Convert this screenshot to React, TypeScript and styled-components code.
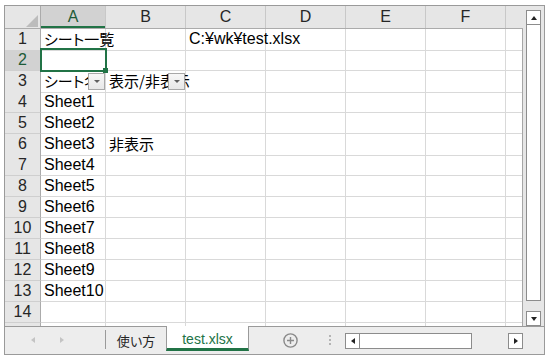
import React from 'react';
import styled, { createGlobalStyle } from 'styled-components';

const GREEN = '#217346';
const GRID = '#d9d9d9';
const HEAD_BG = '#e6e6e6';
const HEAD_LINE = '#ababab';
const FRAME = '#9a9a9a';
const COLS = '36px 65px repeat(5, 80px) 1fr';

const GlobalStyle = createGlobalStyle`
  html, body { margin: 0; background: #fff; }
  body { font-family: "Liberation Sans", "Noto Sans CJK JP", sans-serif; }
`;

const Page = styled.div`
  padding: 5px 0 0 4px;
`;

const Frame = styled.div`
  width: 541px;
  height: 350px;
  box-sizing: border-box;
  border: 1px solid ${FRAME};
  display: flex;
  flex-direction: column;
  background: ${HEAD_BG};
`;

const Upper = styled.div`
  display: flex;
  height: 320px;
`;

const Sheet = styled.div`
  width: 518px;
  display: flex;
  flex-direction: column;
  overflow: hidden;
`;

const HeaderRow = styled.div`
  display: grid;
  grid-template-columns: ${COLS};
  height: 23px;
  box-sizing: border-box;
  border-bottom: 1px solid ${HEAD_LINE};
  background: ${HEAD_BG};
`;

const Corner = styled.div`
  border-right: 1px solid ${HEAD_LINE};
  display: flex;
  justify-content: flex-end;
  align-items: flex-end;
  padding: 0 2px 1px 0;
`;

const ColHead = styled.div<{ $selected?: boolean; $last?: boolean }>`
  border-right: ${(p) => (p.$last ? 'none' : '1px solid #c8c8c8')};
  background: ${(p) => (p.$selected ? '#d2d2d2' : HEAD_BG)};
  box-shadow: ${(p) => (p.$selected ? `inset 0 -2px 0 ${GREEN}` : 'none')};
  color: ${(p) => (p.$selected ? '#1d5b37' : '#262626')};
  font-size: 16px;
  line-height: 22px;
  text-align: center;
`;

const Body = styled.div`
  flex: 1;
  overflow: hidden;
  background: #fff;
  border-right: 1px solid #a6a6a6;
`;

const Row = styled.div`
  display: grid;
  grid-template-columns: ${COLS};
  height: 21px;
`;

const RowHead = styled.div<{ $selected?: boolean }>`
  box-sizing: border-box;
  background: ${(p) => (p.$selected ? '#d2d2d2' : HEAD_BG)};
  border-right: 1px solid ${HEAD_LINE};
  border-bottom: 1px solid #cfcfcf;
  color: ${(p) => (p.$selected ? '#1d5b37' : '#262626')};
  font-size: 16px;
  line-height: 20px;
  text-align: center;
`;

const Cell = styled.div<{ $clip?: boolean; $last?: boolean }>`
  position: relative;
  box-sizing: border-box;
  border-right: ${(p) => (p.$last ? 'none' : `1px solid ${GRID}`)};
  border-bottom: 1px solid ${GRID};
  padding-left: 3px;
  white-space: nowrap;
  overflow: ${(p) => (p.$clip ? 'hidden' : 'visible')};
  font-size: 16px;
  line-height: 20px;
  color: #000;
`;

const Jp = styled.span`
  font-family: "Noto Sans CJK JP", sans-serif;
  font-size: 15px;
  font-feature-settings: "palt";
`;

const Selection = styled.div`
  position: absolute;
  top: -2px;
  left: -1px;
  right: -2px;
  bottom: -2px;
  border: 2px solid ${GREEN};
  z-index: 2;
`;

const Handle = styled.div`
  position: absolute;
  right: -3px;
  bottom: -3px;
  width: 5px;
  height: 5px;
  background: ${GREEN};
  z-index: 3;
`;

const FilterButton = styled.div`
  position: absolute;
  top: 2px;
  right: 0;
  width: 17px;
  height: 17px;
  box-sizing: border-box;
  border: 1px solid #a8a8a8;
  background: linear-gradient(#f7f7f7, #e8e8e8);
  display: flex;
  align-items: center;
  justify-content: center;
  z-index: 1;
`;

const Tri = styled.span<{ $dir: 'up' | 'down' | 'left' | 'right'; $color?: string; $w?: number }>`
  width: 0;
  height: 0;
  border-style: solid;
  border-color: transparent;
  ${(p) => {
    const c = p.$color ?? '#222';
    const w = p.$w ?? 3.5;
    const h = w + 0.5;
    switch (p.$dir) {
      case 'up':
        return `border-width: 0 ${w}px ${h}px ${w}px; border-bottom-color: ${c};`;
      case 'down':
        return `border-width: ${h}px ${w}px 0 ${w}px; border-top-color: ${c};`;
      case 'left':
        return `border-width: ${w}px ${h}px ${w}px 0; border-right-color: ${c};`;
      default:
        return `border-width: ${w}px 0 ${w}px ${h}px; border-left-color: ${c};`;
    }
  }}
`;

const VScroll = styled.div`
  width: 21px;
  display: flex;
  flex-direction: column;
  padding: 4px 0 0 3px;
  box-sizing: border-box;
`;

const ScrollBtn = styled.div`
  width: 15px;
  height: 15px;
  box-sizing: border-box;
  border: 1px solid #8c8c8c;
  background: #fff;
  display: flex;
  align-items: center;
  justify-content: center;
  flex-shrink: 0;
`;

const VThumb = styled.div`
  width: 15px;
  height: 276px;
  box-sizing: border-box;
  border: 1px solid #8c8c8c;
  border-top: none;
  background: #fff;
`;

const VDown = styled(ScrollBtn)`
  margin-top: auto;
`;

const TabBar = styled.div`
  flex: 1;
  display: flex;
  align-items: flex-start;
  border-top: 1px solid ${FRAME};
  background: #ededed;
`;

const Nav = styled.div`
  width: 100px;
  height: 26px;
  box-sizing: border-box;
  padding-left: 26px;
  display: flex;
  align-items: center;
  gap: 25px;
`;

const Divider = styled.div`
  width: 1px;
  height: 19px;
  margin-top: 3px;
  background: ${FRAME};
`;

const SheetTab = styled.div`
  width: 60px;
  height: 25px;
  display: flex;
  align-items: center;
  justify-content: center;
  padding-top: 1px;
  font-family: "Noto Sans CJK JP", sans-serif;
  font-size: 13px;
  font-feature-settings: "palt";
  color: #262626;
`;

const ActiveTab = styled.div`
  margin-top: -1px;
  width: 83px;
  height: 25px;
  box-sizing: border-box;
  border-left: 1px solid ${FRAME};
  border-right: 1px solid ${FRAME};
  border-bottom: 3px solid ${GREEN};
  background: #fff;
  color: ${GREEN};
  font-size: 14px;
  display: flex;
  align-items: center;
  justify-content: center;
  padding-top: 3px;
`;

const AddButton = styled.svg`
  margin: 6px 0 0 34px;
  flex-shrink: 0;
`;

const Dots = styled.div`
  margin: 8px 0 0 31px;
  display: flex;
  flex-direction: column;
  gap: 2px;
  span {
    width: 2px;
    height: 2px;
    background: #b4b4b4;
  }
`;

const HScroll = styled.div`
  margin: 6px 0 0 14px;
  width: 178px;
  height: 16px;
  display: flex;
`;

const HBtn = styled(ScrollBtn)`
  height: 16px;
`;

const HThumb = styled.div`
  width: 112px;
  box-sizing: border-box;
  border: 1px solid #8c8c8c;
  border-left: none;
  background: #fff;
`;

const HTrack = styled.div`
  flex: 1;
`;

type CellData = { text: string; jp?: boolean; filter?: boolean; clip?: boolean };

const data: Record<number, Record<number, CellData>> = {
  1: { 0: { text: 'シート一覧', jp: true }, 2: { text: 'C:¥wk¥test.xlsx' } },
  3: {
    0: { text: 'シート名', jp: true, filter: true, clip: true },
    1: { text: '表示/非表示', jp: true, filter: true },
  },
  6: { 1: { text: '非表示', jp: true } },
};
for (let i = 1; i <= 10; i++) {
  data[i + 3] = { ...(data[i + 3] || {}), 0: { text: `Sheet${i}` } };
}

const letters = ['A', 'B', 'C', 'D', 'E', 'F', ''];
const VISIBLE_ROWS = 14;

const CornerMark = () => (
  <svg width="12" height="12" viewBox="0 0 12 12">
    <polygon points="12,0 12,12 0,12" fill="#bcbcbc" />
  </svg>
);

export default function App() {
  // one extra row peeks in under row 14, its number hidden below the edge
  const rows = Array.from({ length: VISIBLE_ROWS + 1 }, (_, i) => i + 1);
  return (
    <>
      <GlobalStyle />
      <Page>
        <Frame>
          <Upper>
            <Sheet>
              <HeaderRow>
                <Corner>
                  <CornerMark />
                </Corner>
                {letters.map((l, i) => (
                  <ColHead key={i} $selected={i === 0} $last={i === letters.length - 1}>
                    {l}
                  </ColHead>
                ))}
              </HeaderRow>
              <Body>
                {rows.map((r) => (
                  <Row key={r}>
                    <RowHead $selected={r === 2}>{r <= VISIBLE_ROWS ? r : ''}</RowHead>
                    {letters.map((_, c) => {
                      const d = data[r]?.[c];
                      return (
                        <Cell key={c} $clip={d?.clip} $last={c === letters.length - 1}>
                          {d && (d.jp ? <Jp>{d.text}</Jp> : d.text)}
                          {d?.filter && (
                            <FilterButton>
                              <Tri $dir="down" $color="#606060" $w={3} />
                            </FilterButton>
                          )}
                          {r === 2 && c === 0 && (
                            <>
                              <Selection />
                              <Handle />
                            </>
                          )}
                        </Cell>
                      );
                    })}
                  </Row>
                ))}
              </Body>
            </Sheet>
            <VScroll>
              <ScrollBtn>
                <Tri $dir="up" $w={3.5} />
              </ScrollBtn>
              <VThumb />
              <VDown>
                <Tri $dir="down" $w={3.5} />
              </VDown>
            </VScroll>
          </Upper>
          <TabBar>
            <Nav>
              <Tri $dir="left" $color="#c4c4c4" $w={3.5} />
              <Tri $dir="right" $color="#c4c4c4" $w={3.5} />
            </Nav>
            <Divider />
            <SheetTab>使い方</SheetTab>
            <ActiveTab>test.xlsx</ActiveTab>
            <AddButton width="15" height="15" viewBox="0 0 15 15">
              <circle cx="7.5" cy="7.5" r="6.6" fill="none" stroke="#8a8a8a" strokeWidth="1.4" />
              <path d="M7.5 4v7M4 7.5h7" stroke="#8a8a8a" strokeWidth="1.4" />
            </AddButton>
            <Dots>
              <span />
              <span />
              <span />
            </Dots>
            <HScroll>
              <HBtn>
                <Tri $dir="left" $w={3.5} />
              </HBtn>
              <HThumb />
              <HTrack />
              <HBtn>
                <Tri $dir="right" $w={3.5} />
              </HBtn>
            </HScroll>
          </TabBar>
        </Frame>
      </Page>
    </>
  );
}
